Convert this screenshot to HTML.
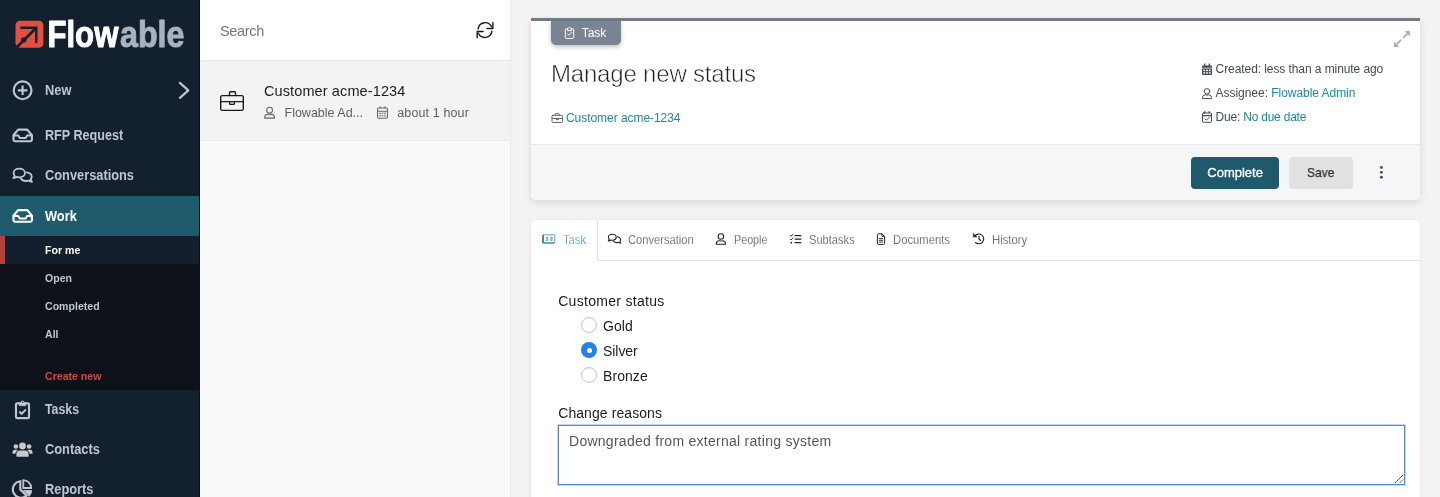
<!DOCTYPE html>
<html lang="en">
<head>
<meta charset="utf-8">
<title>Flowable Work</title>
<style>
*{box-sizing:border-box;margin:0;padding:0}
html,body{width:1440px;height:497px;overflow:hidden;background:#f4f3f1;font-family:"Liberation Sans",sans-serif;color:#212529}
body{position:relative}
#app{position:absolute;left:0;top:0;width:1440px;height:497px;will-change:transform}
svg{display:block;position:absolute;overflow:visible}
.x{position:absolute;white-space:nowrap;transform-origin:0 50%}
/* ---------- sidebar ---------- */
#side{position:absolute;left:0;top:0;width:200px;height:497px;background:#13202e;border-right:1px solid #0a0f1c;overflow:hidden}
.nav{position:absolute;left:0;width:199px;height:40px}
.nav .x{left:45px;top:0;line-height:40px;font-size:14px;font-weight:bold;color:#bfc6ce;transform:scaleX(.915)}
.nav.act{background:#1f5b6c}
.nav.act .x{color:#fff}
#sub{position:absolute;left:0;top:236px;width:199px;height:154px;background:#0d111a}
.subi{position:absolute;left:0;width:199px;height:28px}
.subi .x{left:45px;top:0;line-height:28px;font-size:11.5px;font-weight:bold;color:#bfc6ce;transform:scaleX(.92)}
.subi.act{background:#141f2d;border-left:5px solid #b63d3c}
.subi.act .x{left:40px;color:#fff}
/* ---------- list ---------- */
#list{position:absolute;left:200px;top:0;width:311px;height:497px;background:#fafafa;border-right:1px solid #e7e9ec}
#search{position:absolute;left:0;top:0;width:310px;height:61px;background:#fff;border-bottom:1px solid #e6e9ed}
#item{position:absolute;left:0;top:61px;width:310px;height:80px;background:#f3f3f3;border-bottom:1px solid #e8eaee}
/* ---------- main ---------- */
#card{position:absolute;left:531px;top:18px;width:889px;height:182px;background:#fff;border-top:3px solid #6f7c8c;border-radius:0 0 5px 5px;box-shadow:0 3px 9px rgba(0,0,0,.10),0 0 4px rgba(0,0,0,.03)}
#foot{position:absolute;left:531px;top:144px;width:889px;height:56px;background:#f5f6f8;border-top:1px solid #e8eaed;border-radius:0 0 5px 5px}
#badge{position:absolute;left:551px;top:21px;width:70px;height:24px;background:#7a8593;border-radius:0 0 5px 5px;box-shadow:0 2px 4px rgba(0,0,0,.25)}
.btn{position:absolute;top:157px;height:32px;border-radius:4px}
#panel{position:absolute;left:531px;top:220px;width:889px;height:290px;background:#fff;border-radius:5px 5px 0 0;box-shadow:0 1px 4px rgba(0,0,0,.07)}
#tabline{position:absolute;left:597px;top:260px;width:823px;height:1px;background:#e4e4e4}
#tabv{position:absolute;left:597px;top:220px;width:1px;height:41px;background:#e4e4e4}
.tab{font-size:12px;line-height:18px;top:231.400px;color:#414141;-webkit-text-stroke:.25px #fff}
.meta{font-size:12px;line-height:18px;color:#414b55}
.meta b{font-weight:normal;color:#1b87a3}
.lbl{font-size:14px;line-height:20px;color:#1c1c1c}
.radio{position:absolute;left:581px;width:16px;height:16px;border-radius:50%;border:1px solid #c6c6c6;background:#fff;box-shadow:inset 0 1px 1px rgba(0,0,0,.06)}
.radio.on{border:0;background:#2680eb;box-shadow:none}
.radio.on:after{content:"";position:absolute;left:5.5px;top:5.5px;width:5px;height:5px;border-radius:50%;background:#fff}
#ta{position:absolute;left:558px;top:425px;width:847px;height:60px;border:1px solid #4d88e4;background:#fff;box-shadow:0 0 0 .6px rgba(77,136,228,.55)}
</style>
</head>
<body>
<div id="app">

<!-- ================= SIDEBAR ================= -->
<div id="side">
  <svg id="logo" style="left:0;top:0" viewBox="0 0 200 70" width="200" height="70">
    <rect x="15.5" y="20.7" width="27.9" height="27.1" rx="4.6" fill="#e4503f"/>
    <path d="M21.3 27.8 H36.3 V42" fill="none" stroke="#13202e" stroke-width="2.4" stroke-linecap="round" stroke-linejoin="miter"/>
    <path d="M35.800 28.300 L14.800 49.300" fill="none" stroke="#13202e" stroke-width="2.700"/>
    <path d="M12 47.6 L15.6 44 L19.5 51.5 Z" fill="#13202e"/>
    <circle cx="23.800" cy="39.900" r="2.700" fill="#13202e"/>
    <text x="47.4" y="47.1" font-family="Liberation Sans, sans-serif" font-weight="bold" font-size="37.3" fill="#fff" stroke="#fff" stroke-width="1" stroke-linejoin="round" textLength="71" lengthAdjust="spacingAndGlyphs">Flow</text>
    <text x="120" y="47.1" font-family="Liberation Sans, sans-serif" font-weight="bold" font-size="37.3" fill="#a9b2bd" stroke="#a9b2bd" stroke-width="1" stroke-linejoin="round" textLength="64.5" lengthAdjust="spacingAndGlyphs">able</text>
  </svg>

  <div class="nav" style="top:70px"><span class="x">New</span></div>
  <div class="nav" style="top:115px"><span class="x" style="transform:scaleX(.9)">RFP Request</span></div>
  <div class="nav" style="top:155px"><span class="x">Conversations</span></div>
  <div class="nav act" style="top:196px"><span class="x">Work</span></div>
  <div id="sub">
    <div class="subi act" style="top:0"><span class="x">For me</span></div>
    <div class="subi" style="top:28px"><span class="x">Open</span></div>
    <div class="subi" style="top:56px"><span class="x">Completed</span></div>
    <div class="subi" style="top:84px"><span class="x">All</span></div>
    <div class="subi" style="top:126px"><span class="x" style="color:#d3473f">Create new</span></div>
  </div>
  <div class="nav" style="top:389px"><span class="x" style="transform:scaleX(.88)">Tasks</span></div>
  <div class="nav" style="top:429px"><span class="x">Contacts</span></div>
  <div class="nav" style="top:469px"><span class="x">Reports</span></div>
<!--SI0-->  <svg style="left:0;top:0" width="200" height="497" viewBox="0 0 200 497" fill="none" stroke="#c0c6cd" stroke-width="2.150" stroke-linecap="round" stroke-linejoin="round">
    <!-- plus-circle -->
    <circle cx="22.6" cy="90.3" r="8.9"/>
    <path d="M17.8 90.3 H27.4 M22.6 85.5 V95.1" stroke-linecap="butt"/>
    <!-- chevron -->
    <path d="M179.9 82.9 L188.3 90.4 L179.9 97.9"/>
    <!-- inbox RFP -->
    <g transform="translate(12.5,128.6)">
      <path d="M5.6 1 H14.8 L19.4 6.6 V11.2 a1.4 1.4 0 0 1 -1.4 1.4 H2.4 a1.4 1.4 0 0 1 -1.4 -1.4 V6.6 Z"/>
      <path d="M1.2 7 H5.8 L7.2 9.3 H13.2 L14.6 7 H19.2" stroke-width="2"/>
    </g>
    <!-- comments -->
    <g stroke-width="1.8">
      <path d="M19.3 168.7 c3.3 0 5.7 2 5.7 4.3 s-2.4 4.3 -5.7 4.3 c-1 0 -1.9 -.2 -2.7 -.5 c-.9 .7 -2.1 1.2 -3.3 1.3 c.7 -.8 1.1 -1.6 1.3 -2.5 c-.7 -.7 -1 -1.6 -1 -2.6 c0 -2.3 2.400 -4.300 5.700 -4.300 Z"/>
      <path d="M26.8 172.300 c2.900 .4 4.900 2.200 4.900 4.400 c0 1 -.4 1.900 -1 2.600 c.2 .9 .6 1.700 1.300 2.500 c-1.200 -.1 -2.400 -.6 -3.300 -1.300 c-.8 .3 -1.700 .5 -2.700 .5 c-2.300 0 -4.300 -1 -5.200 -2.500"/>
    </g>
    <!-- inbox Work -->
    <g transform="translate(12.5,209.100)" stroke="#fff">
      <path d="M5.6 1 H14.8 L19.4 6.6 V11.2 a1.4 1.4 0 0 1 -1.4 1.4 H2.4 a1.4 1.4 0 0 1 -1.4 -1.4 V6.6 Z"/>
      <path d="M1.2 7 H5.8 L7.2 9.3 H13.2 L14.6 7 H19.2" stroke-width="2"/>
    </g>
    <!-- clipboard-check -->
    <g>
      <path d="M19.400 403.300 H17.200 a1.200 1.200 0 0 0 -1.200 1.200 V416.900 a1.200 1.200 0 0 0 1.200 1.200 H27.800 a1.200 1.200 0 0 0 1.200 -1.200 V404.500 a1.200 1.200 0 0 0 -1.200 -1.200 H25.600"/>
      <path d="M19.600 405.300 V402.700 H20.600 a2.050 2.050 0 0 1 4 0 H25.600 V405.300 Z" fill="#c5cad0" stroke-width="1"/><circle cx="22.600" cy="402.300" r=".8" fill="#13202e" stroke="none"/>
      <path d="M19.300 411.500 L21.600 413.800 L25.900 409.500" stroke-width="1.900" stroke-linecap="butt" stroke-linejoin="miter"/>
    </g>
    <!-- users -->
    <g fill="#c5cad0" stroke="none">
      <circle cx="22.500" cy="446" r="3.400"/>
      <path d="M16.400 456.200 v-2.200 a3.600 3.600 0 0 1 3.600 -3.600 h5 a3.600 3.600 0 0 1 3.600 3.600 v2.200 a.6 .6 0 0 1 -.6 .6 h-11 a.6 .6 0 0 1 -.6 -.6 Z"/>
      <circle cx="15.900" cy="446.500" r="2.300"/>
      <circle cx="29.100" cy="446.500" r="2.300"/>
      <path d="M12.500 453.800 v-1.600 a2.400 2.400 0 0 1 2.400 -2.400 h2 a2.600 2.600 0 0 1 1 .3 a5 5 0 0 0 -2.600 3.700 Z"/>
      <path d="M32.500 453.800 v-1.600 a2.400 2.400 0 0 0 -2.400 -2.400 h-2 a2.600 2.600 0 0 0 -1 .3 a5 5 0 0 1 2.600 3.700 Z"/>
    </g>
    <!-- chart-pie -->
    <g>
      <path d="M20.300 481.200 a8.300 8.300 0 1 0 6.200 14.600 L20.300 489.600 Z" stroke-linejoin="miter"/>
      <path d="M23.300 480.200 a7.800 7.800 0 0 1 7.800 7.800 H23.300 Z" stroke-linejoin="miter" stroke-width="1.800"/>
      <path d="M23.800 490.600 H31.600 a8 8 0 0 1 -2.300 5.500 Z" fill="#c5cad0" stroke-width="1"/>
    </g>
  </svg>
<!--SI1-->
</div>

<!-- ================= LIST ================= -->
<div id="list">
  <div id="search"><span class="x" style="left:20px;top:22px;font-size:14.5px;line-height:18px;color:#777;letter-spacing:-.35px">Search</span></div>
  <div id="item">
    <span class="x" style="left:64px;top:20px;font-size:14.5px;line-height:20px;color:#1d1d1d;letter-spacing:.11px">Customer acme-1234</span>
    <span class="x" style="left:84.5px;top:43px;font-size:12.5px;line-height:18px;color:#5f5f5f">Flowable Ad...</span>
    <span class="x" style="left:197.3px;top:43px;font-size:12.5px;line-height:18px;color:#5f5f5f;letter-spacing:.12px">about 1 hour</span>
  </div>
</div>

<!-- ================= MAIN ================= -->
<div id="card"></div>
<div id="foot"></div>
<div class="btn" style="left:1191px;width:88px;background:#1f5a6c"></div>
<span class="x" style="left:1207.3px;top:164px;font-size:13px;line-height:18px;color:#fff;-webkit-text-stroke:.3px #fff">Complete</span>
<div class="btn" style="left:1289px;width:64px;background:#e1e1e1"></div>
<span class="x" style="left:1307.4px;top:164px;font-size:13px;line-height:18px;color:#2d2d2d;transform:scaleX(.92);-webkit-text-stroke:.25px #2d2d2d">Save</span>
<div id="badge"></div>
<span class="x" style="left:581.7px;top:24px;font-size:12px;line-height:18px;color:#fff">Task</span>
<span class="x" style="left:551px;top:56.500px;font-size:24px;line-height:34px;color:#222;letter-spacing:-.19px;-webkit-text-stroke:.55px #fff">Manage new status</span>
<span class="x" style="left:566px;top:109px;font-size:12px;line-height:18px;color:#1b87a3;letter-spacing:-.05px">Customer acme-1234</span>
<span class="x meta" style="left:1215.6px;top:60px;letter-spacing:-.08px">Created: less than a minute ago</span>
<span class="x meta" style="left:1215.6px;top:84px;letter-spacing:-.04px">Assignee: <b>Flowable Admin</b></span>
<span class="x meta" style="left:1215.6px;top:108px;letter-spacing:-.22px">Due: <b>No due date</b></span>


<div id="panel"></div>
<div id="tabline"></div><div id="tabv"></div>
<span class="x tab" style="left:562.7px;color:#3a8ca5;transform:scaleX(.932)">Task</span>
<span class="x tab" style="left:628.4px;transform:scaleX(.929)">Conversation</span>
<span class="x tab" style="left:733.8px;transform:scaleX(.895)">People</span>
<span class="x tab" style="left:808.7px;transform:scaleX(.926)">Subtasks</span>
<span class="x tab" style="left:893.2px;transform:scaleX(.938)">Documents</span>
<span class="x tab" style="left:991.6px;transform:scaleX(.943)">History</span>


<span class="x lbl" style="left:558.2px;top:291px;letter-spacing:.3px">Customer status</span>
<div class="radio" style="top:317px"></div><span class="x lbl" style="left:603px;top:316px;letter-spacing:.04px">Gold</span>
<div class="radio on" style="top:342px"></div><span class="x lbl" style="left:603px;top:341px;letter-spacing:-.06px">Silver</span>
<div class="radio" style="top:367px"></div><span class="x lbl" style="left:603px;top:366px;letter-spacing:.07px">Bronze</span>
<span class="x lbl" style="left:558.2px;top:403px;letter-spacing:.08px">Change reasons</span>
<div id="ta"></div>
<span class="x" style="left:569px;top:431px;font-size:14px;line-height:20px;color:#575757;letter-spacing:.27px">Downgraded from external rating system</span>
<svg style="left:1392px;top:472px" width="12" height="12" viewBox="0 0 12 12"><path d="M11 3 L3 11 M11 7.5 L7.5 11" stroke="#555" stroke-width="1" fill="none"/></svg>

<!--PI0--><svg style="left:0;top:0;pointer-events:none" width="1440" height="497" viewBox="0 0 1440 497" fill="none" stroke-linecap="round" stroke-linejoin="round">
  <!-- refresh -->
  <g stroke="#1a1a1a" stroke-width="1.4">
    <path d="M478.1 28.9 A7.1 7.1 0 0 1 491.6 26.8"/>
    <path d="M492.9 22.4 V28.5 H487"/>
    <path d="M491.9 31.2 A7.1 7.1 0 0 1 478.4 33.3"/>
    <path d="M477.2 37.700 V31.500 H483.100"/>
  </g>
  <!-- briefcase big -->
  <g stroke="#1a1a1a" stroke-width="1.4">
    <rect x="220.700" y="95.600" width="22.600" height="14.800" rx="1.700"/>
    <path d="M229.500 95.600 V92.700 a1 1 0 0 1 1 -1 H234.500 a1 1 0 0 1 1 1 V95.600"/>
    <path d="M220.700 101.600 H243.300"/>
    <path d="M229.700 101.600 V103.600 a.8 .8 0 0 0 .8 .8 H233.500 a.8 .8 0 0 0 .8 -.8 V101.600"/>
  </g>
  <!-- user (list) -->
  <g stroke="#666" stroke-width="1.100">
    <circle cx="269.600" cy="110.200" r="2.900"/>
    <path d="M264.700 118.100 V117.400 a3 3 0 0 1 3 -3 c.7 0 1 .4 1.900 .4 s1.200 -.4 1.900 -.4 a3 3 0 0 1 3 3 V118.100 Z"/>
  </g>
  <!-- calendar (list) -->
  <g stroke="#666" stroke-width="1.100">
    <rect x="377.500" y="108" width="10" height="10.200" rx="1.200"/>
    <path d="M377.500 111.200 H387.500 M380 106.700 V108 M385 106.700 V108"/>
    <g stroke="none" fill="#777"><rect x="379.300" y="112.600" width="1.500" height="1.500"/><rect x="381.750" y="112.600" width="1.500" height="1.500"/><rect x="384.200" y="112.600" width="1.500" height="1.500"/><rect x="379.300" y="115" width="1.500" height="1.500"/><rect x="381.750" y="115" width="1.500" height="1.500"/><rect x="384.200" y="115" width="1.500" height="1.500"/></g>
  </g>
  <!-- badge clipboard -->
  <g stroke="#fff" stroke-width="1">
    <path d="M567.500 28.800 H566.300 a1 1 0 0 0 -1 1 V37.400 a1 1 0 0 0 1 1 H572.700 a1 1 0 0 0 1 -1 V29.800 a1 1 0 0 0 -1 -1 H571.500"/>
    <path d="M567.500 30.200 V28.300 H568.400 a1.150 1.150 0 0 1 2.200 0 H571.500 V30.200 Z"/>
    <path d="M567.400 33.800 L568.900 35.300 L571.800 32.400"/>
  </g>
  <!-- briefcase small -->
  <g stroke="#555" stroke-width=".9">
    <rect x="552" y="115.300" width="10.600" height="7.200" rx="1"/>
    <path d="M555.400 115.300 V114.200 a.6 .6 0 0 1 .6 -.6 H558.600 a.6 .6 0 0 1 .6 .6 V115.300"/>
    <path d="M552 118.500 H562.600"/>
    <path d="M556.100 118.500 V119.700 H558.500 V118.500"/>
  </g>
  <!-- calendar solid (created) -->
  <g fill="#3f4a55" stroke="none">
    <path d="M1202 66.400 a1 1 0 0 1 1 -1 h8 a1 1 0 0 1 1 1 v1.400 h-10 Z"/>
    <rect x="1204" y="63.400" width="1.400" height="2.600" rx=".4"/><rect x="1208.600" y="63.400" width="1.400" height="2.600" rx=".4"/>
    <path d="M1202 68.600 h10 v5.500 a1 1 0 0 1 -1 1 h-8 a1 1 0 0 1 -1 -1 Z"/>
    <g fill="#fff"><rect x="1203.400" y="69.700" width="1.700" height="1.500"/><rect x="1206.150" y="69.700" width="1.700" height="1.500"/><rect x="1208.900" y="69.700" width="1.700" height="1.500"/><rect x="1203.400" y="72.200" width="1.700" height="1.500"/><rect x="1206.150" y="72.200" width="1.700" height="1.500"/><rect x="1208.900" y="72.200" width="1.700" height="1.500"/></g>
  </g>
  <!-- user (assignee) -->
  <g stroke="#3f4a55" stroke-width="1">
    <circle cx="1207" cy="91.300" r="2.700"/>
    <path d="M1202.500 98.200 V97.600 a2.800 2.800 0 0 1 2.800 -2.800 c.6 0 .9 .4 1.700 .4 s1.100 -.4 1.700 -.4 a2.800 2.800 0 0 1 2.800 2.800 V98.200 Z"/>
  </g>
  <!-- calendar-check (due) -->
  <g stroke="#3f4a55" stroke-width="1">
    <rect x="1202.500" y="113" width="9" height="9.300" rx="1"/>
    <path d="M1202.500 115.700 H1211.500" stroke-width="1.300"/>
    <path d="M1204.800 111.600 V113 M1209.200 111.600 V113" stroke-width="1.200"/>
    <path d="M1205 118.800 L1206.400 120.200 L1209.200 117.400"/>
  </g>
  <!-- expand -->
  <g stroke="#a5afba" stroke-width="1.700" stroke-linecap="butt">
    <path d="M1408.200 32.800 L1403 38 M1401.300 39.700 L1396 45"/>
    <path d="M1405.200 31.300 H1409.800 V35.900 Z M1394.200 42.100 V46.700 H1398.800 Z" fill="#a5afba" stroke-width=".6" stroke-linejoin="miter"/>
  </g>
  <!-- ellipsis-v -->
  <g fill="#48535e" stroke="none"><circle cx="1381.400" cy="167.500" r="1.450"/><circle cx="1381.400" cy="172.350" r="1.450"/><circle cx="1381.400" cy="177.200" r="1.450"/></g>
  <!-- tab: task -->
  <g stroke="#3a8ca5" stroke-width=".8">
    <rect x="542.600" y="234.800" width="12.200" height="8.300" rx=".9"/>
    <path d="M543.100 235.200 V242.700" stroke-width="1.800" stroke-linecap="butt"/>
    <path d="M542.700 242.900 H554.400" stroke-width="1.200" stroke-linecap="butt"/>
    <g stroke="none" fill="#4a97ae"><rect x="545.900" y="237.100" width="2.500" height="1.400"/><rect x="550.200" y="237.100" width="2.500" height="1.400"/><rect x="545.900" y="239.300" width="2.500" height="1.400"/><rect x="550.200" y="239.300" width="2.500" height="1.400"/></g>
  </g>
  <!-- tab: comments -->
  <g stroke="#222" stroke-width="1.050">
    <path d="M612.300 234.300 c2.200 0 3.900 1.400 3.900 3 s-1.700 3 -3.900 3 c-.7 0 -1.300 -.1 -1.800 -.3 c-.6 .5 -1.400 .8 -2.200 .9 c.5 -.5 .7 -1.100 .8 -1.700 c-.4 -.5 -.7 -1.200 -.7 -1.900 c0 -1.600 1.700 -3 3.900 -3 Z"/>
    <path d="M617.300 236.700 c1.900 .3 3.300 1.500 3.300 3 c0 .7 -.3 1.300 -.7 1.800 c.1 .6 .4 1.200 .9 1.700 c-.8 -.1 -1.600 -.4 -2.200 -.9 c-.5 .2 -1.200 .3 -1.800 .3 c-1.600 0 -2.900 -.7 -3.500 -1.700"/>
  </g>
  <!-- tab: user -->
  <g stroke="#222" stroke-width="1.050">
    <circle cx="720.900" cy="236.500" r="2.800"/>
    <path d="M716.300 244.300 V243.700 a3 3 0 0 1 3 -3 c.600 0 .9 .4 1.600 .4 s1 -.4 1.600 -.4 a3 3 0 0 1 3 3 V244.300 Z"/>
  </g>
  <!-- tab: subtasks -->
  <g stroke="#222" stroke-width="1.250" stroke-linecap="butt">
    <path d="M794.600 235.500 H801.300 M794.600 239.100 H801.300 M794.600 242.700 H801.300"/>
    <path d="M790.200 235.400 L791.100 236.300 L792.800 234.400 M790.200 239 L791.100 239.900 L792.800 238" stroke-width="1" stroke-linecap="round"/>
    <circle cx="791.300" cy="242.700" r=".9" fill="#222" stroke="none"/>
  </g>
  <!-- tab: file -->
  <g stroke="#222" stroke-width="1">
    <path d="M877.400 234.800 a1 1 0 0 1 1 -1 H882 L884.600 236.400 V243.400 a1 1 0 0 1 -1 1 H878.400 a1 1 0 0 1 -1 -1 Z"/>
    <path d="M882 233.800 V236.400 H884.600" stroke-width=".9"/>
    <path d="M879.300 238.600 H882.700 M879.300 240.300 H882.700 M879.300 242 H882.700" stroke-width=".9"/>
  </g>
  <!-- tab: history -->
  <g stroke="#222" stroke-width="1.150">
    <path d="M974.600 236.400 A4.900 4.900 0 1 1 975.500 242.500"/>
    <path d="M973.300 233.700 V236.900 H976.500 Z" fill="#222" stroke-width=".6"/>
    <path d="M979 236.300 V239.200 L980.700 240.500"/>
  </g>
</svg>
<!--PI1-->
</div>
</body>
</html>
